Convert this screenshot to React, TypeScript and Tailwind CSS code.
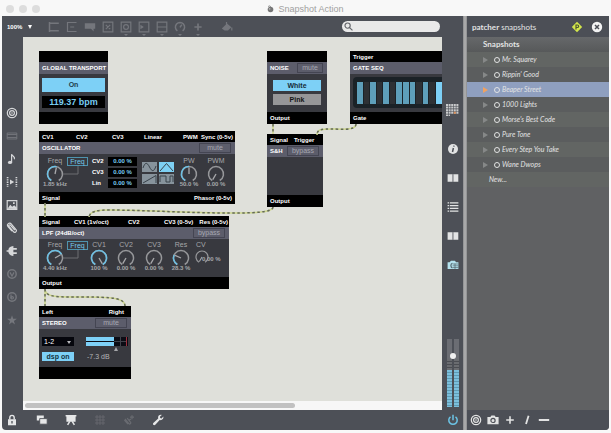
import type { ReactNode } from "react";
import clsx from "clsx";

const snapshots = [
  "Mr. Squarey",
  "Rippin' Good",
  "Beaper Street",
  "1000 Lights",
  "Morse's Best Code",
  "Pure Tone",
  "Every Step You Take",
  "Wane Dwops",
];

/* ---------- icons ---------- */

function Icon({ children, className }: { children: ReactNode; className?: string }) {
  return (
    <svg
      viewBox="0 0 12 12"
      className={clsx("w-3 h-3 shrink-0", className)}
      fill="none"
      stroke="currentColor"
      strokeWidth="1.2"
      aria-hidden="true"
    >
      {children}
    </svg>
  );
}

function Target() {
  return (
    <>
      <circle cx="6" cy="6" r="4.7" />
      <circle cx="6" cy="6" r="2.4" />
      <circle cx="6" cy="6" r="0.8" fill="currentColor" stroke="none" />
    </>
  );
}

function Book() {
  return (
    <>
      <path d="M0.6 2.2h5v7.6h-5zM6.3 2.2h5v7.6h-5z" fill="currentColor" stroke="none" />
      <path d="M5.6 2.4h.7v7.4h-.7z" fill="#8b8d91" stroke="none" />
    </>
  );
}

function Paperclip() {
  return (
    <path
      d="M8.8 8.2 4.6 3.3a1 1 0 0 0-1.6 1.2l4.4 5.2a1.6 1.6 0 0 0 2.6-2L5.2 1.9a2 2 0 0 0-3.2 2.6l4 4.7"
      strokeWidth="1.2"
    />
  );
}

function Camera() {
  return (
    <>
      <path d="M.4 3h3l1-1.4h3.2l1 1.4h3v7.2H.4z" fill="currentColor" stroke="none" />
      <circle cx="6" cy="6.4" r="2.1" stroke="#4d5057" />
    </>
  );
}

const toolIcons: { name: string; menu?: boolean; art: ReactNode }[] = [
  { name: "Object", art: <path d="M1.5 1v10M1.5 2.2h9.3M1.5 9.8h9.3" strokeWidth="1.5" /> },
  { name: "Message", art: <path d="M10.5 1.5h-9v9h9M4.2 6h4" /> },
  { name: "Comment", art: <path d="M.8 2.2h10.4v5.6H9.6v2.6L7 7.8H.8z" fill="currentColor" stroke="none" /> },
  { name: "Toggle", art: <path d="M1.2 1.2h9.6v9.6H1.2zM3.8 3.8l4.4 4.4M8.2 3.8 3.8 8.2" /> },
  {
    name: "Button",
    menu: true,
    art: (
      <>
        <path d="M1.2 1.2h9.6v9.6H1.2z" />
        <circle cx="6" cy="6" r="2.4" />
      </>
    ),
  },
  {
    name: "Number",
    menu: true,
    art: (
      <>
        <path d="M1.2 1.2h9.6v9.6H1.2z" />
        <path d="m2.4 3.8 3.4 2.2-3.4 2.2z" fill="currentColor" stroke="none" />
      </>
    ),
  },
  { name: "Slider", menu: true, art: <path d="M1.2 1.2h9.6v9.6H1.2zM1.2 6h9.6" /> },
  { name: "Dial", menu: true, art: <path d="M3.4 9.8A4.6 4.6 0 1 1 8.6 9.8M6 6.4l1.8-2.8M6 1.4v1" strokeWidth="1.5" /> },
  { name: "Add", menu: true, art: <path d="M6 2.4v7.2M2.4 6h7.2" strokeWidth="1.7" /> },
];

const leftIcons: { name: string; dim?: boolean; art: ReactNode }[] = [
  { name: "Packages", art: <Target /> },
  { name: "Devices", dim: true, art: <path d="M1.2 3h9.6v6H1.2zM1.2 4.5h9.6M1.2 7.5h9.6" strokeWidth="0.9" /> },
  {
    name: "Audio",
    art: (
      <>
        <ellipse cx="4" cy="9.4" rx="2.1" ry="1.6" fill="currentColor" stroke="none" />
        <path d="M5.6 9.4V1.2c.3 2 3.8 2.2 2.8 5" />
      </>
    ),
  },
  {
    name: "Video",
    art: (
      <>
        <path d="M1.6 1v10M10.4 1v10" strokeWidth="1.7" strokeDasharray="1.3 1" />
        <path d="m4 3.6 4.2 2.4L4 8.4z" fill="currentColor" stroke="none" />
      </>
    ),
  },
  {
    name: "Images",
    art: (
      <>
        <path d="M1.2 1.6h9.6v8.8H1.2z" />
        <path d="m1.6 9.8 2.6-4 2 2 2-1.6 2.4 2.4v1.4zM7 3.2h1.7v1.7H7z" fill="currentColor" stroke="none" />
      </>
    ),
  },
  { name: "Attachments", art: <Paperclip /> },
  {
    name: "Plug-ins",
    art: (
      <path
        d="M.6 5.2h1.7C2.6 2.8 4 1.4 7.4 1v2.1h3.4v1.6H7.4v2.6h3.4v1.6H7.4V11C4 10.6 2.6 9.2 2.3 6.8H.6z"
        fill="currentColor"
        stroke="none"
      />
    ),
  },
  {
    name: "Vizzie",
    dim: true,
    art: (
      <>
        <circle cx="6" cy="6" r="4.2" strokeWidth="1.5" />
        <path d="M4 4.4 6 8l2-3.6" />
      </>
    ),
  },
  {
    name: "BEAP",
    dim: true,
    art: (
      <>
        <circle cx="6" cy="6" r="4.2" strokeWidth="1.5" />
        <path d="M5 3.4v4.2" />
        <circle cx="6.2" cy="6.8" r="1.2" />
      </>
    ),
  },
  {
    name: "Favorites",
    dim: true,
    art: (
      <path
        d="m6 1.2 1.2 3.5h3.7L7.9 6.9 9 10.4 6 8.3l-3 2.1 1.1-3.5-3-2.2h3.7z"
        fill="currentColor"
        stroke="none"
      />
    ),
  },
];

const rightIcons: { name: string; tint?: boolean; art: ReactNode }[] = [
  {
    name: "Inspector",
    art: (
      <>
        <circle cx="6" cy="6" r="5" fill="currentColor" stroke="none" />
        <path d="M6.4 5 5.5 9M7 2.6l-.2 1" stroke="#4d5057" strokeWidth="1.5" />
      </>
    ),
  },
  { name: "Reference", art: <Book /> },
  {
    name: "Console",
    art: (
      <>
        <path d="M.6 1.8h1.6M.6 4.6h1.6M.6 7.4h1.6M.6 10.2h1.6" />
        <path d="M3 1.8h8.4M3 4.6h8.4M3 7.4h8.4M3 10.2h8.4" />
      </>
    ),
  },
  { name: "Lessons", art: <Book /> },
  {
    name: "Snapshots",
    tint: true,
    art: (
      <>
        <path d="M.6 3.2h2L4 1.8h4l1 1.4h2.4V10H.6z" fill="currentColor" stroke="none" />
        <path d="M5.6 5h5.8M5.6 6.8h5.8M5.6 8.6h5.8M8 4.6V10" stroke="#53666e" strokeWidth="0.7" />
        <path d="M5.4 4.2c-2 .6-2 4 0 4.8" stroke="#53666e" />
      </>
    ),
  },
];

/* ---------- module parts ---------- */

function Module({
  title,
  inlets,
  outlets,
  action,
  className,
  children,
}: {
  title: string;
  inlets?: ReactNode;
  outlets?: ReactNode;
  action?: ReactNode;
  className: string;
  children?: ReactNode;
}) {
  return (
    <section
      className={clsx(
        "absolute h-[73px] flex flex-col bg-black text-white text-[6px] leading-[8px] font-bold whitespace-nowrap",
        className
      )}
    >
      <div className="h-[11px] shrink-0 px-[3px] flex items-center">{inlets}</div>
      <header className="h-3 shrink-0 pl-[3px] pr-1 flex items-center justify-between bg-[#5c5d6b]">
        <h2>{title}</h2>
        {action}
      </header>
      <div className="flex-1 bg-[#38393f]">{children}</div>
      <footer className="h-3 shrink-0 px-[3px] flex items-center justify-between">{outlets}</footer>
    </section>
  );
}

function HeaderButton({ children, className }: { children: ReactNode; className: string }) {
  return (
    <button className={clsx("h-[10px] leading-[8px] border border-[#444552] text-[#a7a8b2] text-[7px] font-normal", className)}>
      {children}
    </button>
  );
}

// point on a dial, angle in degrees clockwise from twelve o'clock
function polar(angle: number, radius: number) {
  const a = (angle * Math.PI) / 180;
  return `${10 + radius * Math.sin(a)} ${10 - radius * Math.cos(a)}`;
}

function Dial({ value, className = "size-5" }: { value: number; className?: string }) {
  const angle = -150 + value * 300;
  return (
    <svg viewBox="0 0 20 20" className={className} fill="none" aria-hidden="true">
      <path d={`M${polar(-150, 7.5)}A7.5 7.5 0 1 1 ${polar(150, 7.5)}`} stroke="#96979a" strokeWidth="1.5" />
      {value > 0 && (
        <path
          d={`M${polar(-150, 7.5)}A7.5 7.5 0 ${value > 0.6 ? 1 : 0} 1 ${polar(angle, 7.5)}`}
          stroke="#6cc0e4"
          strokeWidth="1.5"
        />
      )}
      <path d={`M10 10L${polar(angle, 6.5)}`} stroke="#a9aaad" strokeWidth="1.3" />
    </svg>
  );
}

function Knob({ label, value, text, className = "w-7" }: { label: string; value: number; text: string; className?: string }) {
  return (
    <div className={clsx("shrink-0 flex flex-col items-center text-[#a6a7aa] leading-[8px]", className)}>
      <span className="text-[7px] font-normal">{label}</span>
      <Dial value={value} className="size-5 -mt-px -mb-1" />
      <span>{text}</span>
    </div>
  );
}

function FreqMode() {
  return (
    <div className="w-[21px] shrink-0">
      <button className="block w-full h-[9px] leading-[7px] border border-[#4f93ae] text-[#74c9ec] text-[7px] font-normal">Freq</button>
      <svg viewBox="0 0 21 10" className="w-[21px] h-[10px] overflow-visible" fill="none" aria-hidden="true">
        <path d="M11 0v8H-4" stroke="#6d6e72" />
      </svg>
    </div>
  );
}

function Wave({ d, on, name }: { d: string; on?: boolean; name: string }) {
  return (
    <button aria-label={name} className={clsx("h-[10px]", on ? "bg-[#7dd0f3]" : "bg-[#87939c]")}>
      <svg viewBox="0 0 15 10" className="w-[15px] h-[10px]" fill="none">
        <path d={d} stroke="#39424a" />
      </svg>
    </button>
  );
}

/* ---------- patch ---------- */

const cords = [
  "M45 203V217",
  "M273 124V134",
  "M356 124C356 131 340 129 332 129C322 129 317 129 317 135",
  "M273 207C273 213 250 213 228 213C190 213 140 210 110 210C98 210 90 211 89 217",
  "M45 289V306",
  "M45 289C45 298 60 297 83 297C112 297 125 298 125 306",
];

const gates = [true, false, true, false, true, false, true, true, true, false, true, false];

function Patch() {
  return (
    <main className="relative flex-1 min-h-0 overflow-hidden bg-[#dfe0da]">
      <Module className="left-4 top-[14px] w-[69px]" title="GLOBAL TRANSPORT">
        <div className="px-[3px] pt-1 flex flex-col gap-1">
          <button className="h-[14px] bg-[#7dd0f6] text-[#1d3d4c] text-[7px]">On</button>
          <output className="h-3 bg-black text-[#78cdf2] text-[9px] leading-3 text-center">119.37 bpm</output>
        </div>
      </Module>

      <Module
        className="left-[244px] top-[14px] w-[60px]"
        title="NOISE"
        action={<HeaderButton className="w-[26px]">mute</HeaderButton>}
        outlets="Output"
      >
        <div className="px-1.5 pt-1.5 flex flex-col gap-[3px] text-[7px]">
          <button className="h-[11px] bg-[#7dd0f6] text-[#152b36]">White</button>
          <button className="h-[11px] bg-[#969698] text-[#151515]">Pink</button>
        </div>
      </Module>

      <Module className="left-[327px] top-[14px] w-[140px]" title="GATE SEQ" inlets="Trigger" outlets="Gate">
        <div className="mx-[3px] mt-[3px] h-[31px] rounded bg-[#1b2227] pl-1 pt-[5px] flex gap-px">
          <div className="w-[78px] flex gap-px">
            {gates.map((on, i) => (
              <div key={i} className={clsx("flex-1 h-[22px]", on ? "bg-[#5e9fba]" : "bg-[#2e3135]")} />
            ))}
          </div>
          <div className="w-3 h-[22px] bg-[#7dd0f6]" />
        </div>
      </Module>

      <Module
        className="left-4 top-[94px] w-[196px]"
        title="OSCILLATOR"
        action={<HeaderButton className="w-8">mute</HeaderButton>}
        inlets={
          <div className="grid grid-cols-[34px_36px_32px_39px_18px_32px]">
            <span>CV1</span>
            <span>CV2</span>
            <span>CV3</span>
            <span>Linear</span>
            <span>PWM</span>
            <span className="justify-self-end">Sync (0-5v)</span>
          </div>
        }
        outlets={
          <>
            <span>Signal</span>
            <span>Phasor (0-5v)</span>
          </>
        }
      >
        <div className="pt-[3px] pl-0.5 flex">
          <Knob label="Freq" value={0.54} text="1.85 kHz" />
          <div className="-ml-0.5">
            <FreqMode />
          </div>
          <dl className="ml-1 grid grid-cols-[16px_29px] gap-y-0.5">
            {["CV2", "CV3", "Lin"].map((name) => (
              <div key={name} className="contents">
                <dt className="leading-[9px]">{name}</dt>
                <dd className="h-[9px] leading-[9px] bg-black text-center text-[#78cdf2]">0.00 %</dd>
              </div>
            ))}
          </dl>
          <div className="ml-[5px] pt-[5px] grid grid-cols-[15px_15px] gap-0.5 content-start">
            <Wave name="Sine" d="M1 6C3 0 5 0 7.500 5S12 10 14 4" />
            <Wave name="Triangle" on d="M1 9 7.5 1.500 14 9" />
            <Wave name="Saw" d="M1 9 14 1.5V9" />
            <Wave name="Square" d="M1 8V2h6v6h4V2h3v6" />
          </div>
          <Knob label="PW" value={0.5} text="50.0 %" className="w-7 ml-px" />
          <Knob label="PWM" value={0} text="0.00 %" className="w-[26px]" />
        </div>
      </Module>

      <Module
        className="left-[244px] top-[97px] w-14"
        title="S&H"
        action={<HeaderButton className="w-8">bypass</HeaderButton>}
        inlets={
          <div className="flex gap-1.5">
            <span>Signal</span>
            <span>Trigger</span>
          </div>
        }
        outlets="Output"
      />

      <Module
        className="left-4 top-[179px] w-[190px]"
        title="LPF (24dB/oct)"
        action={<HeaderButton className="w-8">bypass</HeaderButton>}
        inlets={
          <div className="grid grid-cols-[32px_54px_36px_32px_32px]">
            <span>Signal</span>
            <span>CV1 (1v/oct)</span>
            <span>CV2</span>
            <span>CV3 (0-5v)</span>
            <span className="justify-self-end">Res (0-5v)</span>
          </div>
        }
        outlets="Output"
      >
        <div className="pt-0.5 pl-0.5 flex">
          <Knob label="Freq" value={0.7} text="4.40 kHz" />
          <div className="-ml-0.5">
            <FreqMode />
          </div>
          <Knob label="CV1" value={1} text="100 %" className="w-[22px]" />
          <Knob label="CV2" value={0} text="0.00 %" className="w-8" />
          <Knob label="CV3" value={0} text="0.00 %" className="w-6" />
          <Knob label="Res" value={0.28} text="28.3 %" className="w-[30px]" />
          <div className="w-7 text-[#a6a7aa] -ml-0.5">
            <div className="text-[7px] font-normal pl-0.5">CV</div>
            <div className="flex">
              <Dial value={0} className="size-4 shrink-0" />
              <span className="pt-1.5 -ml-2">0.00 %</span>
            </div>
          </div>
        </div>
      </Module>

      <Module
        className="left-4 top-[269px] w-[92px]"
        title="STEREO"
        action={<HeaderButton className="w-8">mute</HeaderButton>}
        inlets={
          <div className="flex-1 flex justify-between pr-1">
            <span>Left</span>
            <span>Right</span>
          </div>
        }
      >
        <div className="px-[3px] pt-2 grid grid-cols-[32px_42px] gap-x-3 gap-y-1.5">
          <div className="relative h-[9px]">
            <select
              aria-label="Output pair"
              className="appearance-none block w-full h-[9px] bg-[#05060c] text-white pl-0.5 leading-[9px] font-normal text-[7px]"
            >
              <option>1-2</option>
            </select>
            <svg viewBox="0 0 4 3" className="absolute right-[3px] top-1 w-1 h-[3px] pointer-events-none" fill="#b8b9bd">
              <path d="M0 0h4L2 3z" />
            </svg>
          </div>
          <svg viewBox="0 0 42 14" className="w-[42px] h-[14px] -mb-[5px]" aria-hidden="true">
            <path d="M0 0h42v9H0z" fill="#0b0c14" />
            <path d="M0 0h28v4H0zM0 5h28v4H0z" fill="#7dd0f6" />
            <path d="M28 4.5h12M34.5 0v9" stroke="#3f4149" />
            <path d="M40.5 0v9" stroke="#9c2f3c" />
            <path d="m30 10-2 4h4z" fill="#a6a7aa" />
          </svg>
          <button className="h-[9px] bg-[#7dd0f6] text-[#12303d] text-[7px] leading-[9px]">dsp on</button>
          <span className="text-[7px] leading-[9px] font-normal text-[#b4b5b8] pl-px">-7.3 dB</span>
        </div>
      </Module>

      {/* patch cords */}
      <svg
        viewBox="23 37 419 364"
        className="absolute left-0 top-0 w-[419px] h-[364px] pointer-events-none"
        fill="none"
        aria-hidden="true"
      >
        {cords.map((d) => (
          <g key={d} strokeWidth="1.5">
            <path d={d} stroke="#cdd68c" />
            <path d={d} stroke="#646a58" strokeDasharray="2.500 2.500" />
          </g>
        ))}
      </svg>
    </main>
  );
}

/* ---------- window ---------- */

function Toolbar() {
  return (
    <div className="h-[21px] shrink-0 flex items-center pl-[5px] pr-[23px] text-[#74767c]">
      <label className="relative flex items-center w-6">
        <select
          aria-label="Zoom"
          className="appearance-none w-full h-3 text-[6px] font-bold leading-3 text-white"
        >
          <option>100%</option>
        </select>
        <svg viewBox="0 0 4 4" className="absolute right-[-1px] w-1 h-1 pointer-events-none" fill="#fff">
          <path d="M0 0h4L2 4z" />
        </svg>
      </label>
      <div className="ml-[17px] flex gap-1.5">
        {toolIcons.map(({ name, menu, art }) => (
          <button key={name} aria-label={name} className="relative">
            <Icon>{art}</Icon>
            {menu && (
              <svg viewBox="0 0 4 2" className="absolute left-1 top-[13px] w-1 h-0.5" fill="currentColor">
                <path d="M0 0h4L2 2z" />
              </svg>
            )}
          </button>
        ))}
      </div>
      <button aria-label="Format" className="ml-[17px]">
        <Icon>
          <path d="M.8 7.6 6 2.4l4.4 3.8-3.4 3.3H3.6z" fill="currentColor" stroke="none" />
          <path d="M5.5 1v3.600M10.8 6.500v3" />
        </Icon>
      </button>
      <div className="relative ml-auto">
        <input
          type="search"
          aria-label="Search"
          className="block w-[98px] h-[11px] rounded-full bg-[#e9e9e9] pl-3 text-[7px] text-black outline-none"
        />
        <svg
          viewBox="0 0 10 10"
          className="absolute left-0.5 top-px w-[9px] h-[9px] pointer-events-none"
          fill="none"
          stroke="#66686d"
          strokeWidth="1.3"
        >
          <circle cx="4" cy="4" r="2.9" />
          <path d="m6.2 6.2 3.2 3.2" />
        </svg>
      </div>
    </div>
  );
}

function LeftStrip() {
  return (
    <nav className="w-[21px] shrink-0 flex flex-col items-center pt-[64px] text-[#d6d7d9]">
      {leftIcons.map(({ name, dim, art }) => (
        <button key={name} aria-label={name} className={clsx("h-[23px] pr-px", dim && "text-[#75777d]")}>
          <Icon>{art}</Icon>
        </button>
      ))}
    </nav>
  );
}

function RightStrip() {
  return (
    <nav className="w-[21px] shrink-0 flex flex-col items-center text-[#e2e3e4]">
      <button aria-label="Grid" className="mt-[67px]">
        <svg viewBox="0 0 13 12" className="w-[13px] h-3" stroke="#c9cacc" strokeWidth="2" strokeDasharray="2 .6">
          <path d="M0 1h13M0 3.6h13M0 6.2h13M0 8.8h13M0 11.4h4" />
          <path d="M7.800 8.800h2" stroke="#d98a52" strokeDasharray="none" />
        </svg>
      </button>
      <div className="mt-[18px] flex flex-col">
        {rightIcons.map(({ name, tint, art }) => (
          <button key={name} aria-label={name} className={clsx("h-[29px]", tint && "text-[#b5e3ef]")}>
            <Icon>{art}</Icon>
          </button>
        ))}
      </div>
      <div className="relative mt-auto mb-[3px] w-3 h-[68px] flex gap-0.5">
        {["l", "r"].map((ch) => (
          <div key={ch} className="flex-1 flex flex-col bg-[#6b6d73]">
            <div className="h-5" />
            <div className="h-[11px] bg-[repeating-linear-gradient(#6a6c70_0_2px,#4b4d52_2px_3px)]" />
            <div className="flex-1 bg-[repeating-linear-gradient(#7bbfdc_0_2px,#5e9ab3_2px_3px)]" />
          </div>
        ))}
        <div className="absolute left-[3px] top-[14px] size-1.5 rounded-full bg-[#f0f0f0]" />
      </div>
    </nav>
  );
}

function BottomBar() {
  return (
    <div className="h-5 shrink-0 flex items-center px-1 text-[#e6e7e8]">
      <button aria-label="Lock">
        <Icon>
          <path d="M2 5.2h8v6H2z" fill="currentColor" stroke="none" />
          <path d="M3.8 5.5V3.6a2.2 2.2 0 0 1 4.4 0v1.9" strokeWidth="1.4" />
          <path d="M6 7v2.5" stroke="#4d5057" strokeWidth="1.3" />
        </Icon>
      </button>
      <div className="ml-[18px] flex gap-[17px]">
        <button aria-label="Views">
          <Icon>
            <path d="M.8 1.6h7v5h-7z" fill="currentColor" stroke="none" />
            <path d="M3.7 4.6h7.5v5.6H3.7z" fill="currentColor" stroke="#4d5057" strokeWidth="0.9" />
          </Icon>
        </button>
        <button aria-label="Presentation">
          <Icon>
            <path d="M.6 1h10.8v1.4h-.8v5.4H1.400V2.400H.6z" fill="currentColor" stroke="none" />
            <path d="M4.8 7.4 2.6 10.8M7.2 7.4l2.2 3.4" strokeWidth="1.5" />
          </Icon>
        </button>
        <button aria-label="Snap to grid" className="text-[#696b71]">
          <Icon>
            <path d="M3 1v10M6 1v10M9 1v10M1 3h10M1 6h10M1 9h10" strokeWidth="0.8" />
          </Icon>
        </button>
        <button aria-label="Add attachment" className="text-[#696b71]">
          <Icon>
            <path d="m2 5 3.8 4.5a1 1 0 0 0 1.8-1.2L4.2 4.2M1.4 6 5 10.2M9 1.2v4M7 3.2h4M5.5 6.6 8 5" />
          </Icon>
        </button>
        <button aria-label="Tools">
          <Icon>
            <path
              d="M9.8.9 7.9 2.8l.3 1.3 1.3.3 1.9-1.9c.4 2.500-1.500 4.100-3.700 3.500L3.300 10.800c-1.300 1.200-3.200-.5-2-1.900l4.900-4.500C5.500 2.200 7.300.3 9.800.9z"
              fill="currentColor"
              stroke="none"
            />
          </Icon>
        </button>
      </div>
      <button aria-label="Audio power" className="ml-auto text-[#6cc4e6]">
        <Icon>
          <path d="M3.5 2.8a4.2 4.2 0 1 0 5 0M6 .8v5.4" strokeWidth="1.5" />
        </Icon>
      </button>
    </div>
  );
}

function SnapshotPanel() {
  return (
    <aside className="w-[142px] shrink-0 flex flex-col bg-[#606163] text-[#e2e3e3] font-[Lato,sans-serif]">
      <header className="h-[21px] shrink-0 flex items-center pl-[5px] pr-1.5 bg-[#4c4f56]">
        <h1 className="text-[8px] leading-3">
          <b>patcher</b> <span>snapshots</span>
        </h1>
        <button aria-label="Parameters" className="ml-auto">
          <Icon>
            <path d="M6 .8 11.2 6 6 11.2.8 6z" fill="#d3e64b" stroke="none" />
            <path d="M5 8.4V4h1.4a1.2 1.2 0 0 1 0 2.5H5" stroke="#4c5530" />
          </Icon>
        </button>
        <button aria-label="Close" className="ml-2">
          <Icon>
            <circle cx="6" cy="6" r="5.2" fill="#f3f3f3" stroke="none" />
            <path d="m4 4 4 4M8 4 4 8" stroke="#4c4f56" strokeWidth="1.5" />
          </Icon>
        </button>
      </header>
      <h2 className="h-[15px] leading-[15px] pl-4 text-[8px] font-bold bg-linear-to-b from-[#66686a] to-[#57595a]">
        Snapshots
      </h2>
      <ul className="text-[7px] italic">
        {snapshots.map((name, i) => (
          <li
            key={name}
            className={clsx(
              "h-[15px] flex items-center pl-4",
              name === "Beaper Street" ? "bg-[#8f9fbf]" : i % 2 ? "bg-[#5b5d5e]" : "bg-[#626563]"
            )}
          >
            <svg viewBox="0 0 5 6" className="w-[5px] h-1.5" fill={name === "Beaper Street" ? "#f0a261" : "#868888"}>
              <path d="M0 0l5 3-5 3z" />
            </svg>
            <input
              type="radio"
              name="snapshot"
              aria-label={name}
              className="appearance-none ml-1.5 size-1.5 rounded-full border border-[#e2e3e3]"
            />
            <span className="ml-0.5">{name}</span>
          </li>
        ))}
        <li className="h-[15px] flex items-center pl-[22px] bg-[#626563]">New...</li>
      </ul>
      <footer className="mt-auto h-5 shrink-0 flex items-center gap-[5px] pl-[3px] bg-[#4c4f56]">
        <button aria-label="Embed">
          <Icon>
            <Target />
          </Icon>
        </button>
        <button aria-label="Take snapshot">
          <Icon>
            <Camera />
          </Icon>
        </button>
        <button aria-label="Add snapshot">
          <Icon>
            <path d="M6 2.2v7.6M2.2 6h7.6" strokeWidth="1.6" />
          </Icon>
        </button>
        <button aria-label="Rename snapshot">
          <Icon>
            <path d="M7.6 1.8 5 10" strokeWidth="1.8" />
          </Icon>
        </button>
        <button aria-label="Remove snapshot">
          <Icon>
            <path d="M.8 6h10.4" strokeWidth="1.8" />
          </Icon>
        </button>
      </footer>
    </aside>
  );
}

export default function App() {
  return (
    <div className="h-screen flex flex-col bg-[#f8f8f8] px-0.5 pb-[3px] font-['Liberation_Sans',Arial,sans-serif]">
      <div className="relative h-4 shrink-0 flex items-center justify-center gap-1 text-[9px] leading-4 text-[#a0a0a0]">
        <div className="absolute left-1 top-[5px] flex gap-[5px]">
          <span className="size-2 rounded-full bg-[#dddddd]" />
          <span className="size-2 rounded-full bg-[#dddddd]" />
          <span className="size-2 rounded-full bg-[#dddddd]" />
        </div>
        <svg viewBox="0 0 7 8" className="w-[7px] h-2 mt-0.5" aria-hidden="true">
          <circle cx="3.5" cy="4.5" r="2.8" fill="#757575" />
          <path d="M1 1.5 3 .8l1 1.4" stroke="#9b9b9b" fill="none" />
          <circle cx="2.6" cy="3.8" r="0.9" fill="#b5b5b5" />
        </svg>
        <span className="mt-0.5">Snapshot Action</span>
      </div>
      <div className="flex-1 min-h-0 flex rounded-b overflow-hidden">
        <div className="flex-1 min-w-0 flex flex-col bg-[#4d5057]">
          <Toolbar />
          <div className="flex-1 min-h-0 flex">
            <LeftStrip />
            <div className="flex-1 min-w-0 flex flex-col">
              <Patch />
              <div className="h-[9px] shrink-0 bg-[#f7f7f7] px-0.5 pt-0.5">
                <div className="w-[65%] h-[5px] rounded-full bg-[#c1c1c1]" />
              </div>
            </div>
            <RightStrip />
          </div>
          <BottomBar />
        </div>
        <div className="w-1 shrink-0 bg-linear-to-r from-[#8b8c8e] via-[#b2b2b2] to-[#8b8c8e]" />
        <SnapshotPanel />
      </div>
    </div>
  );
}
